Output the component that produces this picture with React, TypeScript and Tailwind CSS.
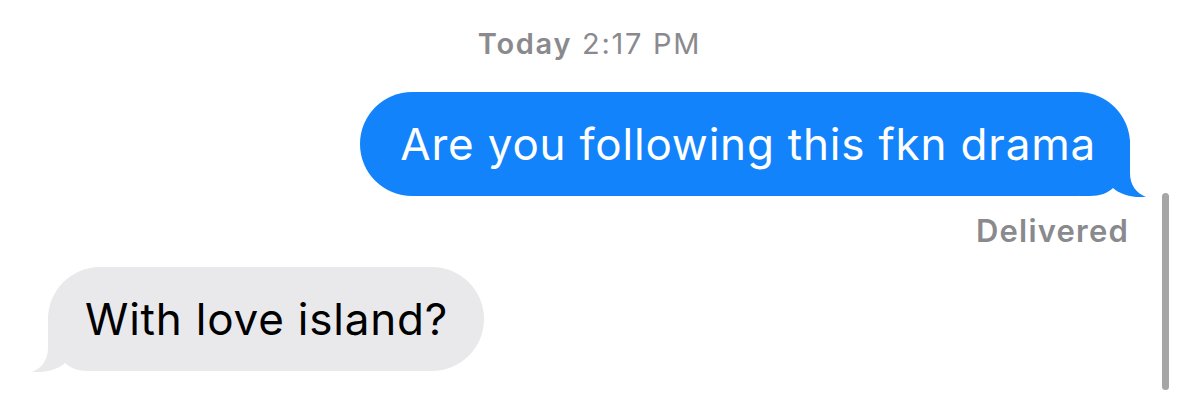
import React from 'react';

type Side = 'left' | 'right';

// bubble tail, drawn for the right side and mirrored for the left one
const Tail: React.FC<{ side: Side; color: string }> = ({ side, color }) => (
  <svg
    viewBox="0 0 66 57"
    className={`absolute bottom-[-1px] w-[66px] h-[57px] ${side === 'right' ? 'right-[-16px]' : 'left-[-16px] -scale-x-100'}`}
  >
    <path
      d="M50 0 L50 33 C50 45 56 53 66 57 C56 58 42 56 33 48 C28 53 20 56 10 56 L0 56 L0 0 Z"
      fill={color}
    />
  </svg>
);

const Bubble: React.FC<{ side: Side; text: string }> = ({ side, text }) => {
  const mine = side === 'right';
  return (
    <div
      className={`relative rounded-[52px] h-[104px] flex items-center text-[44px] tracking-[0.8px] ${
        mine ? 'bg-[#1283fb] text-white pl-[40px] pr-[34px]' : 'bg-[#e9e9eb] text-black pl-[37px] pr-[36px]'
      }`}
    >
      <Tail side={side} color={mine ? '#1283fb' : '#e9e9eb'} />
      <span className="relative">{text}</span>
    </div>
  );
};

export default function App() {
  return (
    <div className="relative w-[1179px] h-[400px] bg-white overflow-hidden font-['Inter','Liberation_Sans',sans-serif]">
      <div className="pt-[27px] text-center text-[29px] leading-[34px] tracking-[1.7px] text-[#8a8a8e]">
        <span className="font-semibold">Today</span> <span>2:17 PM</span>
      </div>

      <div className="mt-[31px] flex justify-end pr-[49px]">
        <Bubble side="right" text="Are you following this fkn drama" />
      </div>

      <div className="mt-[17px] pr-[50px] text-right text-[31px] leading-[36px] tracking-[1.2px] font-semibold text-[#8a8a8e]">
        Delivered
      </div>

      <div className="mt-[18px] flex pl-[48px]">
        <Bubble side="left" text="With love island?" />
      </div>

      {/* scroll indicator */}
      <div className="absolute left-[1162px] top-[193px] w-[7px] h-[197px] rounded-full bg-[#a6a6a6]" />
    </div>
  );
}
